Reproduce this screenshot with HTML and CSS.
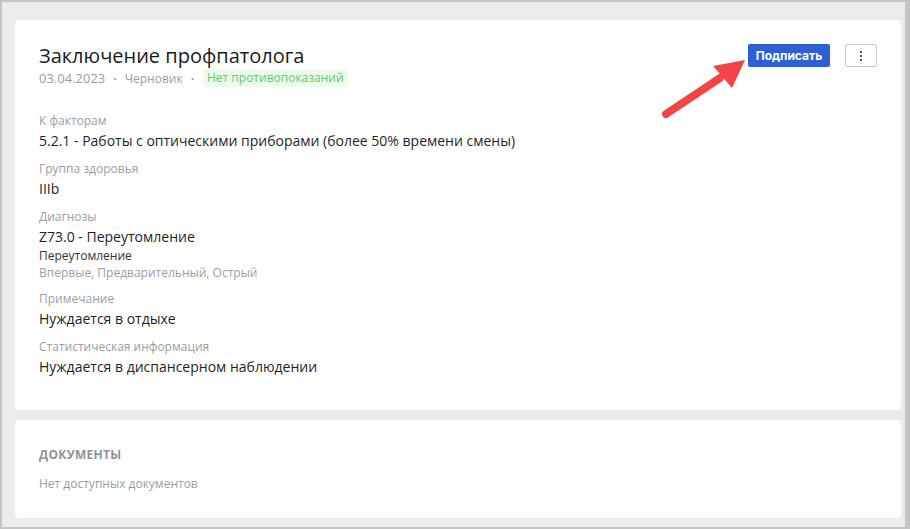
FILE: index.html
```html
<!DOCTYPE html>
<html lang="ru">
<head>
<meta charset="utf-8">
<link rel="stylesheet" href="styles.css">
</head>
<body>
<div class="frame">
  <section class="card main">
    <div class="head">
      <div>
        <h1 class="title">Заключение профпатолога</h1>
        <div class="meta">
          <span class="date">03.04.2023</span><span class="dot">•</span><span>Черновик</span><span class="dot">•</span><span class="badge">Нет противопоказаний</span>
        </div>
      </div>
      <div class="actions">
        <button class="btn-primary">Подписать</button>
        <button class="btn-more" aria-label="Ещё">
          <svg width="2" height="10" viewBox="0 0 2 10"><rect x="0" y="0" width="2" height="2" fill="#555"/><rect x="0" y="4" width="2" height="2" fill="#555"/><rect x="0" y="8" width="2" height="2" fill="#555"/></svg>
        </button>
      </div>
    </div>
    <div class="fields">
      <div class="field">
        <div class="label">К факторам</div>
        <div class="value">5.2.1 - Работы с оптическими приборами (более 50% времени смены)</div>
      </div>
      <div class="field">
        <div class="label">Группа здоровья</div>
        <div class="value">IIIb</div>
      </div>
      <div class="field">
        <div class="label">Диагнозы</div>
        <div class="value">Z73.0 - Переутомление</div>
        <div class="sub">Переутомление</div>
        <div class="sub muted">Впервые, Предварительный, Острый</div>
      </div>
      <div class="field">
        <div class="label">Примечание</div>
        <div class="value">Нуждается в отдыхе</div>
      </div>
      <div class="field">
        <div class="label">Статистическая информация</div>
        <div class="value">Нуждается в диспансерном наблюдении</div>
      </div>
    </div>
  </section>
  <section class="card docs">
    <h2 class="docs-title">ДОКУМЕНТЫ</h2>
    <div class="docs-empty">Нет доступных документов</div>
  </section>
  <svg class="arrow" width="100" height="70" viewBox="0 0 100 70">
    <line x1="8" y1="58" x2="62" y2="22" stroke="#f44343" stroke-width="8" stroke-linecap="round"/>
    <polygon points="87,4 55,10 74,32" fill="#f44343"/>
  </svg>
</div>
</body>
</html>
```

FILE: styles.css
```css
* { box-sizing: border-box; }
html, body { margin: 0; padding: 0; }
body {
  font-family: "Open Sans", "Noto Sans", sans-serif;
  color: #1f1f1f;
  background: #c3c4c6;
}
.frame {
  position: relative;
  width: 910px;
  height: 529px;
  background: #ebecee;
  border: 2px solid #c3c4c6;
  border-right-width: 5px;
  padding: 18px 4px 10px 13px;
  display: flex;
  flex-direction: column;
  gap: 10px;
  overflow: hidden;
}
.card {
  background: #fff;
  border-radius: 4px;
}
.main {
  padding: 24px 24px 33px;
}
.head {
  display: flex;
  justify-content: space-between;
  align-items: flex-start;
}
.title {
  margin: 0;
  font-size: 20px;
  font-weight: 400;
  line-height: 24px;
  color: #1a1a1a;
}
.meta {
  display: flex;
  align-items: center;
  height: 20px;
  font-size: 12px;
  color: #9a9ea3;
}
.date { font-size: 13px; }
.dot {
  margin: 0 8px;
  font-size: 9px;
}
.badge {
  background: #ebfbec;
  color: #5fcb6d;
  padding: 0 4px;
  line-height: 18px;
  border-radius: 3px;
  margin-left: 1px;
}
.actions {
  display: flex;
  gap: 15px;
}
.btn-primary {
  height: 23px;
  width: 82px;
  border: 0;
  border-radius: 2px;
  background: #2f5fd4;
  color: #fff;
  font-family: "Inter", "Noto Sans", sans-serif;
  font-weight: 700;
  font-size: 12px;
  padding: 0;
}
.btn-more {
  width: 32px;
  height: 23px;
  border: 1px solid #c6c8cc;
  border-radius: 2px;
  background: #fff;
  display: flex;
  align-items: center;
  justify-content: center;
  padding: 0;
}
.fields {
  margin-top: 25px;
  display: flex;
  flex-direction: column;
  gap: 10px;
}
.label {
  font-size: 12px;
  line-height: 16px;
  color: #9a9ea3;
  margin-bottom: 2px;
}
.value {
  font-size: 14px;
  line-height: 20px;
  color: #1f1f1f;
}
.sub {
  font-size: 12px;
  line-height: 17px;
  color: #333;
}
.sub.muted { color: #9a9ea3; }
.docs {
  padding: 27px 24px 26px;
}
.docs-title {
  margin: 0 0 13px;
  font-size: 12px;
  line-height: 16px;
  font-weight: 700;
  letter-spacing: 0.3px;
  color: #8e9298;
}
.docs-empty {
  font-size: 12px;
  line-height: 16px;
  color: #9a9ea3;
}
.arrow {
  position: absolute;
  left: 656px;
  top: 54px;
}
```
